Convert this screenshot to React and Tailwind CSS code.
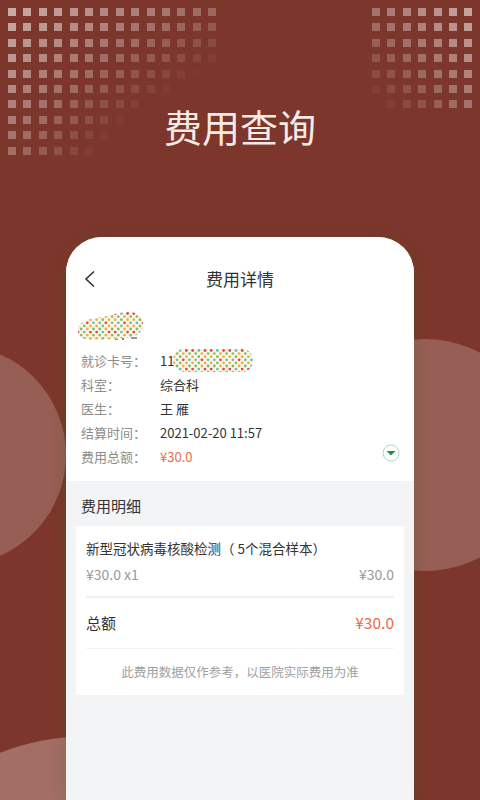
import React, { useId } from 'react';

const font = { fontFamily: '"Noto Sans CJK SC", "Noto Sans", sans-serif' };

function DotGrid({ cols, rows, mirror }) {
  const dots = [];
  for (let r = 0; r < rows; r++) {
    for (let c = 0; c < cols; c++) {
      const d = cols - 1 - c;
      const op = mirror
        ? 0.55 - 0.04 * d - 0.04 * r - 0.002 * d * r
        : 0.58 - 0.026 * c - 0.033 * r - 0.0025 * c * r;
      dots.push(<div key={`${r}-${c}`} className="w-2 h-2 bg-white" style={{ opacity: Math.max(0, op) }} />);
    }
  }
  return (
    <div className="grid gap-[7.4px]" style={{ gridTemplateColumns: `repeat(${cols}, 8px)` }}>
      {dots}
    </div>
  );
}

// mosaico de colores que tapa datos privados
function Mosaic({ width, height, shape, children }) {
  const id = useId();
  const colors = ['#e8453c', '#7fb97d', '#f0b044', '#6fbcbc', '#f0b044', '#93bf5f'];
  const dots = [];
  for (let y = 0; y < 10; y++) {
    for (let x = 0; x < 15; x++) {
      dots.push(
        <circle key={`${x}-${y}`} cx={x * 6.2 + (y % 2 ? 3.1 : 0) + 1} cy={y * 3.1 + 1.5} r="1.4" fill={colors[(x * 2 + y * 5 + (x % 3)) % colors.length]} />
      );
    }
  }
  return (
    <svg width={width} height={height} className="block">
      <clipPath id={id}><path d={shape} /></clipPath>
      {children}
      <g clipPath={`url(#${id})`}>
        <rect width={width} height={height} fill="#f9f6ea" />
        {dots}
      </g>
    </svg>
  );
}

function InfoRow({ label, children }) {
  return (
    <div className="flex items-center h-6">
      <span className="w-[79px] text-[13px] text-[#8c8c8c]">{label}</span>
      <div className="text-[13px] text-[#333333]">{children}</div>
    </div>
  );
}

export default function App() {
  return (
    <div className="relative h-[800px] w-[480px] overflow-hidden bg-[#7c362b] [text-spacing-trim:space-all]" style={font}>
      <div className="absolute left-[-154px] top-[345px] w-[220px] h-[220px] rounded-full bg-[#965e55]" />
      <div className="absolute left-[309px] top-[339px] w-[232px] h-[232px] rounded-full bg-[#965e55]" />
      <div className="absolute left-[-160px] top-[736px] w-[500px] h-[500px] rounded-full bg-[#a26e66]" />
      <div className="absolute left-2 top-2">
        <DotGrid cols={14} rows={10} />
      </div>
      <div className="absolute left-[372px] top-2">
        <DotGrid cols={7} rows={7} mirror />
      </div>

      <div className="relative flex flex-col items-center">
        <h1 className="mt-[101px] h-[136px] text-[38px] leading-[50px] text-[#f6e9e6]">费用查询</h1>

        <div className="w-[348px] h-[563px] rounded-t-[36px] bg-[#f3f4f6] overflow-hidden shadow-[0_0_14px_rgba(80,90,40,0.3)]">
          <div className="bg-white h-[244px] px-[15px]">
            <div className="relative flex justify-center h-[75px] pt-[29px]">
              <svg width="12" height="18" viewBox="0 0 12 18" className="absolute left-[3px] top-[33px]" fill="none" stroke="#333333" strokeWidth="1.6">
                <path d="M10 1.5 2 9l8 7.5" />
              </svg>
              <span className="text-[17px] leading-[26px] text-[#333333]">费用详情</span>
            </div>
            <div className="mb-[8px] -ml-[4px]">
              <Mosaic width={67} height={29} shape="M1 17C2 9 14 6 24 5C34 4 40 0 52 0C62 0 67 8 66 14C65 22 56 26 46 26C34 27 24 28 14 28C6 28 0 24 1 17Z">
                <path d="M38 27h3M46 25v3M54 26h6" stroke="#333333" strokeWidth="1.2" />
              </Mosaic>
            </div>
            <InfoRow label="就诊卡号：">
              <div className="relative flex items-center">
                <span>11</span>
                <div className="absolute left-[13px] top-[-2px]">
                  <Mosaic width={80} height={23} shape="M11 0H69A11 11.500 0 0 1 69 23H11A11 11.500 0 0 1 11 0Z" />
                </div>
              </div>
            </InfoRow>
            <InfoRow label="科室：">综合科</InfoRow>
            <InfoRow label="医生：">王 雁</InfoRow>
            <InfoRow label="结算时间：">2021-02-20 11:57</InfoRow>
            <div className="relative">
              <InfoRow label="费用总额："><span className="text-[#ec6b43]">¥30.0</span></InfoRow>
              <svg width="18" height="18" viewBox="0 0 18 18" className="absolute right-[-1px] top-[-1px]">
                <circle cx="9" cy="9" r="8" fill="white" stroke="#a5dcc0" strokeWidth="1" />
                <path d="M4.5 7h9L9 11.5z" fill="#22943f" />
              </svg>
            </div>
          </div>

          <div className="h-[45px] pt-[12px] px-[15px] text-[15px] leading-[26px] text-[#333333]">费用明细</div>

          <div className="mx-[10px] h-[169px] bg-white px-[10px]">
            <div className="h-[72px] border-b-2 border-[#eff1f0]">
              <div className="pt-[12px] text-[13.5px] leading-5 text-[#333333]">
                新型冠状病毒核酸检测（<span className="ml-[3px]">5个混合样本）</span>
              </div>
              <div className="flex justify-between mt-[6px] text-[14px] leading-5 text-[#999999]">
                <span>¥30.0 x1</span>
                <span>¥30.0</span>
              </div>
            </div>
            <div className="flex items-center justify-between h-[51px] border-b border-[#f3f3f3]">
              <span className="text-[15px] text-[#333333]">总额</span>
              <span className="text-[15.5px] text-[#ec6b43]">¥30.0</span>
            </div>
            <div className="flex items-center justify-center h-[46px] text-[12.5px] text-[#a0a0a0]">
              此费用数据仅作参考，以医院实际费用为准
            </div>
          </div>
        </div>
      </div>
    </div>
  );
}
